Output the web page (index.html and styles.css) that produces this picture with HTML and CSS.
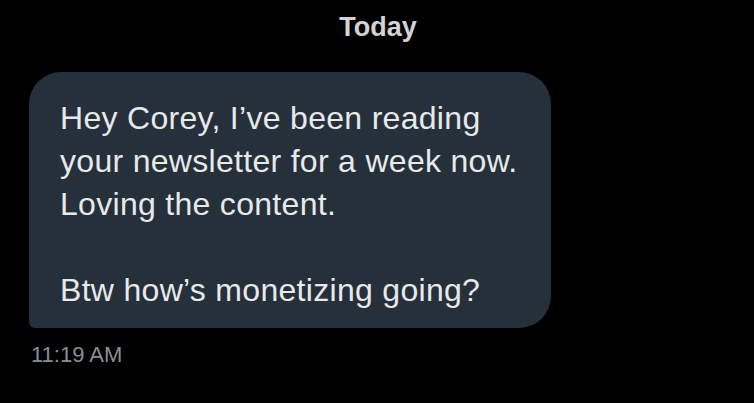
FILE: index.html
```html
<!DOCTYPE html>
<html>
<head>
<meta charset="utf-8">
<link rel="stylesheet" href="styles.css">
</head>
<body>
<div class="chat">
  <div class="day">Today</div>
  <div class="bubble">
    <p>Hey Corey, I’ve been reading<br>your newsletter for a week now.<br>Loving the content.</p>
    <p>Btw how’s monetizing going?</p>
  </div>
  <div class="time">11:19 AM</div>
</div>
</body>
</html>
```
FILE: styles.css
```css
html, body {
  margin: 0;
  padding: 0;
  background: #000;
  width: 754px;
  height: 403px;
  overflow: hidden;
}
.chat {
  font-family: "Liberation Sans", Arial, sans-serif;
  display: flex;
  flex-direction: column;
}
.day {
  align-self: center;
  margin-left: 2px;
  padding-top: 12px;
  height: 60px;
  box-sizing: border-box;
  font-size: 27px;
  font-weight: bold;
  color: #d3d3d3;
  line-height: 30px;
}
.bubble {
  margin-left: 29px;
  width: 522px;
  height: 256px;
  box-sizing: border-box;
  margin-top: 12px;
  padding: 25px 10px 0 31px;
  background: #25303a;
  border-radius: 32px 32px 32px 6px;
  color: #e7e9ea;
  font-size: 32px;
  letter-spacing: 0.3px;
  line-height: 43px;
}
.bubble p {
  margin: 0 0 43px 0;
}
.time {
  margin-left: 31px;
  margin-top: 14px;
  font-size: 22px;
  color: #8b8f93;
}
```
